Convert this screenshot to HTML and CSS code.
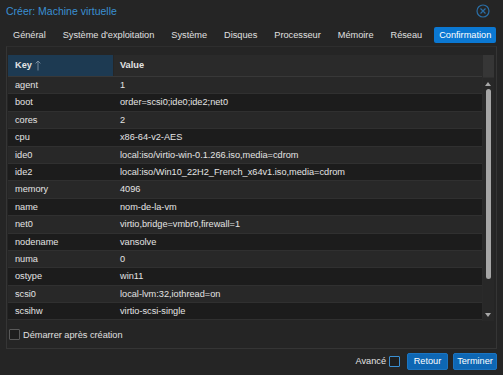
FILE: index.html
```html
<!DOCTYPE html>
<html lang="fr">
<head>
<meta charset="utf-8">
<link rel="stylesheet" href="styles.css">
</head>
<body>
<div class="dialog">
  <div class="titlebar">
    <span class="title">Créer: Machine virtuelle</span>
    <svg class="close" width="14" height="14" viewBox="0 0 14 14">
      <circle cx="7" cy="7" r="6" fill="none" stroke="#2a6ea6" stroke-width="1.2"/>
      <path d="M4.5 4.5 L9.5 9.5 M9.5 4.5 L4.5 9.5" stroke="#2a6ea6" stroke-width="1.2"/>
    </svg>
  </div>
  <div class="tabs">
    <span class="tab">Général</span>
    <span class="tab">Système d'exploitation</span>
    <span class="tab">Système</span>
    <span class="tab">Disques</span>
    <span class="tab">Processeur</span>
    <span class="tab">Mémoire</span>
    <span class="tab">Réseau</span>
    <span class="tab active">Confirmation</span>
  </div>
  <div class="panel">
    <div class="grid">
      <div class="table">
        <div class="row head">
          <div class="c key sorted">Key
            <svg class="arrow" width="6" height="11" viewBox="0 0 6 11">
              <path d="M3 10.5 V1 M0.6 3.4 L3 1 L5.4 3.4" fill="none" stroke="#7f93a5" stroke-width="0.9"/>
            </svg>
          </div>
          <div class="c val">Value</div>
        </div>
        <div class="row"><div class="c key">agent</div><div class="c val">1</div></div>
        <div class="row alt"><div class="c key">boot</div><div class="c val">order=scsi0;ide0;ide2;net0</div></div>
        <div class="row"><div class="c key">cores</div><div class="c val">2</div></div>
        <div class="row alt"><div class="c key">cpu</div><div class="c val">x86-64-v2-AES</div></div>
        <div class="row"><div class="c key">ide0</div><div class="c val">local:iso/virtio-win-0.1.266.iso,media=cdrom</div></div>
        <div class="row alt"><div class="c key">ide2</div><div class="c val">local:iso/Win10_22H2_French_x64v1.iso,media=cdrom</div></div>
        <div class="row"><div class="c key">memory</div><div class="c val">4096</div></div>
        <div class="row alt"><div class="c key">name</div><div class="c val">nom-de-la-vm</div></div>
        <div class="row"><div class="c key">net0</div><div class="c val">virtio,bridge=vmbr0,firewall=1</div></div>
        <div class="row alt"><div class="c key">nodename</div><div class="c val">vansolve</div></div>
        <div class="row"><div class="c key">numa</div><div class="c val">0</div></div>
        <div class="row alt"><div class="c key">ostype</div><div class="c val">win11</div></div>
        <div class="row"><div class="c key">scsi0</div><div class="c val">local-lvm:32,iothread=on</div></div>
        <div class="row alt"><div class="c key">scsihw</div><div class="c val">virtio-scsi-single</div></div>
      </div>
      <div class="scroll">
        <div class="scroll-head"></div>
        <div class="track">
          <span class="up"></span>
          <span class="thumb"></span>
          <span class="down"></span>
        </div>
      </div>
    </div>
    <label class="start">
      <span class="box"></span>
      <span>Démarrer après création</span>
    </label>
  </div>
  <div class="footer">
    <span class="adv">Avancé</span>
    <span class="box blue"></span>
    <span class="btn back">Retour</span>
    <span class="btn finish">Terminer</span>
  </div>
</div>
</body>
</html>
```

FILE: styles.css
```css
html, body {
  margin: 0;
  padding: 0;
  background: #252525;
}
body {
  font-family: "Liberation Sans", Arial, sans-serif;
  font-size: 9.2px;
  color: #e4e4e4;
}
.dialog {
  width: 503px;
  height: 375px;
  display: flex;
  flex-direction: column;
  background: #252525;
}
.titlebar {
  height: 21px;
  flex: none;
  display: flex;
  align-items: center;
  justify-content: space-between;
  padding: 0 13px 0 6px;
}
.title {
  font-size: 10.5px;
  color: #3a8fd2;
}
.close {
  margin-top: 1px;
}
.tabs {
  height: 25px;
  flex: none;
  display: flex;
  align-items: center;
  gap: 7px;
  padding-left: 8px;
  padding-top: 2px;
  box-sizing: border-box;
}
.tab {
  height: 16px;
  line-height: 16px;
  padding: 0 5px;
  color: #e0e0e0;
  border-radius: 2px;
}
.tab.active {
  background: #0b78d2;
  color: #ffffff;
}
.panel {
  height: 303px;
  flex: none;
  box-sizing: border-box;
  margin: 0 6px;
  border: 1px solid #353535;
  border-top-color: #2e2e2e;
  padding: 8px 2px 0 1px;
  display: flex;
  flex-direction: column;
}
.grid {
  display: flex;
  height: 266px;
  flex: none;
}
.table {
  flex: 1;
}
.row {
  display: flex;
  height: 16.4px;
  line-height: 16.4px;
  background: #282828;
  border-bottom: 1px solid #303030;
}
.row.alt {
  background: #1c1c1c;
}
.row.head {
  height: 21px;
  line-height: 21px;
  background: #2a2a2a;
  border-bottom: 1px solid #383838;
  font-weight: bold;
}
.c {
  padding-left: 7px;
  white-space: nowrap;
}
.key {
  width: 98px;
}
.sorted {
  background: #1d3a52;
  display: flex;
  align-items: center;
  gap: 3px;
}
.head .val {
  border-left: 1px solid #262626;
  padding-left: 6px;
}
.arrow {
  margin-top: -1px;
}
.val {
  flex: 1;
}
.scroll {
  width: 11px;
  display: flex;
  flex-direction: column;
  border-left: 1px solid #2a2a2a;
}
.scroll-head {
  height: 22px;
  background: #363636;
  border-bottom: 1px solid #2f2f2f;
}
.track {
  flex: 1;
  position: relative;
  background: #282828;
}
.up, .down {
  position: absolute;
  left: 2px;
  width: 0;
  height: 0;
  border-left: 3.5px solid transparent;
  border-right: 3.5px solid transparent;
}
.up {
  top: 4px;
  border-bottom: 4px solid #a8a8a8;
}
.down {
  bottom: 4px;
  border-top: 4px solid #a8a8a8;
}
.thumb {
  position: absolute;
  left: 3px;
  width: 5px;
  top: 11px;
  height: 190px;
  background: #a6a6a6;
  border-radius: 3px;
}
.start {
  display: flex;
  align-items: center;
  gap: 3px;
  height: 27px;
  padding-left: 1px;
  color: #e0e0e0;
}
.box {
  width: 9px;
  height: 9px;
  border: 1px solid #5a5a5a;
  border-radius: 1px;
  background: #1e1e1e;
  display: inline-block;
}
.box.blue {
  border-color: #3a8fd2;
  margin-top: 3px;
}
.footer {
  flex: 1;
  display: flex;
  align-items: flex-start;
  justify-content: flex-end;
  padding: 4px 6px 0 0;
}
.adv {
  margin-right: 3px;
  line-height: 17px;
}
.btn {
  height: 17px;
  line-height: 15px;
  padding: 0;
  background: #0e67b4;
  color: #ffffff;
  border-radius: 2px;
  border: 1px solid #1b74c0;
  box-sizing: border-box;
  text-align: center;
}
.back {
  width: 41px;
  margin-left: 7px;
}
.finish {
  width: 44px;
  margin-left: 5px;
}
```
